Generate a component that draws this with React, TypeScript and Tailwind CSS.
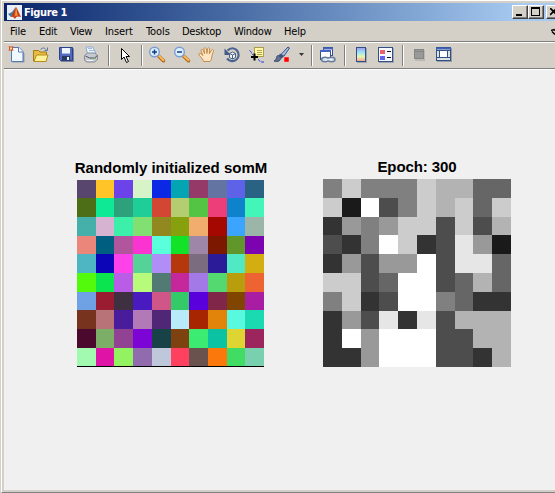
import React from "react";

const COLORS = [
  ["#58466f", "#fec428", "#6c43e9", "#d7f4c8", "#0b28e4", "#04a5b3", "#953969", "#6374a3", "#5e62e8", "#296282"],
  ["#4d6d17", "#0ee996", "#2ca17b", "#1dce98", "#d44634", "#b4cd70", "#54c445", "#ee3e79", "#0e83cb", "#43f5b8"],
  ["#45b0aa", "#d7b3d2", "#3df0a9", "#82df72", "#91891f", "#87a10e", "#f0ad6e", "#a40801", "#3ba4ff", "#9bb5a9"],
  ["#eb867a", "#005f81", "#b1559d", "#fb34d1", "#5affdb", "#12e328", "#9d86a8", "#7c1800", "#61972a", "#7b04b0"],
  ["#4db6c2", "#0c04b7", "#fe41e8", "#54d297", "#b18df7", "#b5380d", "#7b6c80", "#2b1b98", "#50e9c3", "#d2ae10"],
  ["#54fa0c", "#0be34f", "#b95de7", "#b8fa7a", "#517a72", "#c4289a", "#a279e7", "#53d970", "#b89d0d", "#ee6332"],
  ["#6fa2e5", "#991c30", "#3e3040", "#481abf", "#cf5687", "#34ca67", "#5900dc", "#802749", "#804600", "#a81da1"],
  ["#78331e", "#b87378", "#481c9b", "#b179b5", "#502776", "#b7ebf9", "#a82502", "#e2830a", "#59f9df", "#1bdab2"],
  ["#4c092e", "#7dae67", "#914292", "#7c04d5", "#174348", "#7e4210", "#3ceb72", "#0bc3a2", "#ded532", "#9c255d"],
  ["#a2fab0", "#df13a6", "#93f25f", "#906bae", "#bfc7db", "#ff405e", "#6a534e", "#fb790c", "#40dc64", "#79d0ae"],
];

const GRAYS = [
  [128, 204, 128, 128, 128, 204, 179, 179, 102, 102],
  [204, 26, 255, 77, 128, 204, 179, 204, 102, 204],
  [51, 153, 128, 153, 204, 204, 77, 204, 77, 179],
  [77, 51, 128, 255, 204, 51, 77, 230, 153, 26],
  [51, 153, 77, 153, 153, 255, 77, 230, 230, 102],
  [204, 204, 77, 102, 255, 255, 77, 102, 179, 102],
  [128, 204, 51, 77, 255, 255, 128, 102, 51, 51],
  [51, 153, 77, 230, 51, 230, 77, 179, 179, 179],
  [51, 255, 153, 255, 255, 255, 77, 77, 179, 179],
  [51, 51, 153, 255, 255, 255, 77, 77, 51, 179],
].map((r) => r.map((v) => `rgb(${v},${v},${v})`));

function Heatmap({ rows, className }: { rows: string[][]; className: string }) {
  return (
    <div className={`grid ${className}`}>
      {rows.flatMap((r, i) => r.map((c, j) => <div key={`${i}-${j}`} style={{ backgroundColor: c }} />))}
    </div>
  );
}

/* A toolbar slot; x is the slot's offset in the toolbar, w its width. */
function Slot({ x, w, children }: { x: number; w: number; children?: React.ReactNode }) {
  return (
    <svg className="block shrink-0" width={w} height={25} viewBox={`${x} 43 ${w} 25`} aria-hidden="true">
      {children}
    </svg>
  );
}

function Sep({ x }: { x: number }) {
  return (
    <g shapeRendering="crispEdges">
      <rect x={x} y={45} width={1} height={21} fill="#808080" />
      <rect x={x + 1} y={45} width={1} height={21} fill="#fff" />
    </g>
  );
}

function Magnifier({ x, plus }: { x: number; plus?: boolean }) {
  return (
    <g>
      <path d={`M${x + 10} 56.5l4.500 4.200`} stroke="#a8641e" strokeWidth="3.6" strokeLinecap="round" />
      <path d={`M${x + 10.2} 56.2l4.300 4`} stroke="#ffb653" strokeWidth="2.2" strokeLinecap="round" />
      <circle cx={x + 5.5} cy={52} r={4.8} fill="#d9f1fc" stroke="#7b9cd4" strokeWidth="1.4" />
      <path d={`M${x + 3} 52h5`} stroke="#173a80" strokeWidth="1.5" />
      {plus && <path d={`M${x + 5.5} 49.5v5`} stroke="#173a80" strokeWidth="1.5" />}
    </g>
  );
}

function Toolbar() {
  return (
    <div className="flex h-[25px] w-[551px] overflow-hidden bg-[#d4d0c8]">
      <Slot x={4} w={24}>
        <path d="M11.5 48.5h8l4 4v9h-12z" fill="#8d98ad" transform="translate(1 1)" />
        <path d="M11.5 47.500h7.500l4 4v10h-11.500z" fill="#f0f8ff" stroke="#5579b5" />
        <path d="M18.500 47.500v4.500h4.500" fill="#fff" stroke="#5579b5" />
        <path d="M8.500 46l5 5M13.500 46l-5 5" stroke="#ed8458" strokeWidth="1" />
        <rect x="9.500" y="47" width="3" height="3" fill="#ffd9a0" stroke="#d84f28" />
      </Slot>
      <Slot x={28} w={26}>
        <path d="M33.500 61V50.500h5l1.500 1.500h6.500v9z" fill="#e6bd3e" stroke="#a37b12" />
        <path d="M34 61.500l2.500-6.500h11.500l-2 6.500z" fill="#fff09a" stroke="#b78b1c" />
        <path d="M40.500 49.500c2-2 4-2 5.500 0M47.500 47.500v3h-3" fill="none" stroke="#58779b" />
      </Slot>
      <Slot x={54} w={26}>
        <path d="M60 48h13.500v13.500H61l-1-1z" fill="#7c8598" transform="translate(.5 .5)" />
        <path d="M59.500 47.500h13v13h-12l-1-1z" fill="#5468bd" stroke="#29418b" />
        <rect x="62" y="48" width="8" height="6" fill="#eef5ff" />
        <rect x="62" y="53" width="8" height="1" fill="#a2bce9" />
        <rect x="62" y="56" width="8" height="4" fill="#293761" />
        <rect x="67" y="57" width="2" height="3" fill="#eef5ff" />
      </Slot>
      <Slot x={80} w={25}>
        <path d="M87.500 54l-1.500-7h6.500l3.500 6z" fill="#eef7ff" stroke="#8fa9cd" />
        <path d="M88 48.500h4M89 50.500h5" stroke="#9cb9df" />
        <path d="M84.500 55.500l3-2.500h7l3 2.500v4l-3 2.500h-8l-2-2z" fill="#c6c9cf" stroke="#858b96" />
        <path d="M85.500 56l4 2h5l3-2.500" fill="none" stroke="#50565f" />
        <path d="M87 60.500h6" stroke="#f4f4f4" /><rect x="94" y="58" width="2" height="1" fill="#70ba52" />
      </Slot>
      <Slot x={105} w={39}>
        <Sep x={108} /><Sep x={141} />
        <path d="M121.500 48.500v11l2.500-2.500 2.500 5.500 2-1-2.500-5h3.500z" fill="#fff" stroke="#000" />
      </Slot>
      <Slot x={144} w={28}><Magnifier x={149} plus /></Slot>
      <Slot x={172} w={24}><Magnifier x={174} /></Slot>
      <Slot x={196} w={24}>
        <path d="M203.500 61.500l-1-2.500-3.500-4c-.8-1.500.8-2.300 2-1.200l2 1.700-2-4.500c-.5-1.700 1.300-2.200 2-.8l1.700 3.600-.7-4.800c-.2-1.600 1.800-1.700 2.200-.2l.8 4.700.5-4.700c.3-1.500 2.200-1.300 2 .2l-.2 4.800 2.200-3.600c1-1.300 2.500-.4 2 1l-1.500 4-.5 4-1.500 2.300z" fill="#ffe5c3" stroke="#c48d4c" />
      </Slot>
      <Slot x={220} w={26}>
        <path d="M227.500 50.500c3-3 7-3 9.500 0 2.500 3 2 7-.5 9-3 2.500-7 2-9.500-1" fill="none" stroke="#4b6390" strokeWidth="2.200" />
        <path d="M224.500 48.500v6.500h6.500z" fill="#435b86" />
        <path d="M229.500 53.500l3-1.500 3 1.500v4l-3 1.500-3-1.500z" fill="#eff4fb" stroke="#4c6185" />
        <path d="M229.500 53.500l3 1.500 3-1.500M232.500 55v4" fill="none" stroke="#4c6185" />
      </Slot>
      <Slot x={246} w={25}>
        <path d="M249.500 50.500c2 1 2 3 3.500 4.500M258 59.500c1.500 0 1.500 2.500 3 2.500h3" fill="none" stroke="#2937df" strokeDasharray="3 1" />
        <rect x="254.500" y="47.500" width="9" height="9" fill="#fff8a8" stroke="#ad9c4a" />
        <path d="M257 50.500h5M257 52.500h5M257 54.500h5" stroke="#b3a452" />
        <path d="M251 57h7M254.500 53.500v7" stroke="#000" strokeWidth="2" />
      </Slot>
      <Slot x={271} w={24}>
        <path d="M281 54.500l7-7.500 1.500 1-5.500 8z" fill="#a9bfe3" stroke="#344f82" />
        <path d="M280 53.500l4 3-2.500 2-3-2z" fill="#405078" />
        <path d="M278.500 55.500c-3 0-1 4-4.500 5.500 4 1.500 7-.5 7-3.500z" fill="#5f7191" stroke="#3d4d70" />
        <rect x="284" y="57" width="5" height="5" fill="#f50508" stroke="#ffbbb0" strokeWidth=".5" />
      </Slot>
      <Slot x={295} w={21}>
        <path d="M299 53h5l-2.500 3z" fill="#333" /><Sep x={311} />
      </Slot>
      <Slot x={316} w={30}>
        <rect x="323.500" y="47.500" width="9" height="8" fill="#fff" stroke="#35528e" /><path d="M323 48.500h10" stroke="#4564bf" strokeWidth="2" />
        <rect x="320.500" y="50.500" width="10" height="9" fill="#fff" stroke="#35528e" /><path d="M320 51h11" stroke="#4564bf" strokeWidth="2" />
        <ellipse cx="325" cy="59.500" rx="3.500" ry="2.300" fill="#d5dfec" stroke="#667c9b" strokeWidth="1.500" />
        <ellipse cx="331.500" cy="59.500" rx="3.500" ry="2.300" fill="#d5dfec" stroke="#667c9b" strokeWidth="1.500" />
        <path d="M325 59.500h7" stroke="#e7edf5" strokeWidth="1.500" /><Sep x={344} />
      </Slot>
      <Slot x={346} w={26}>
        <defs>
          <linearGradient id="colorbar" x1="0" y1="0" x2="0" y2="1">
            <stop offset="0" stopColor="#a197ef" /><stop offset=".35" stopColor="#9be5f7" />
            <stop offset=".65" stopColor="#e9f5ad" /><stop offset="1" stopColor="#f49e8c" />
          </linearGradient>
        </defs>
        <rect x="357" y="48" width="10" height="15" fill="#9da5b4" />
        <rect x="356.500" y="47.500" width="9" height="14" fill="url(#colorbar)" stroke="#344f84" />
      </Slot>
      <Slot x={372} w={32}>
        <rect x="379" y="48" width="15" height="15" fill="#9da5b4" />
        <rect x="378.500" y="47.500" width="14" height="14" fill="#f6f9ff" stroke="#344f84" />
        <rect x="380" y="50" width="5" height="4" fill="#e86565" /><rect x="380" y="56" width="5" height="4" fill="#6565ec" />
        <path d="M387 51.500h4M387 57.500h4" stroke="#111" /><Sep x={402} />
      </Slot>
      <Slot x={404} w={26}>
        <rect x="415" y="50" width="10" height="11" fill="#bbb8b2" />
        <rect x="414.500" y="49.500" width="9" height="9" fill="#999" stroke="#858585" /><path d="M415 51.500h8" stroke="#858585" />
      </Slot>
      <Slot x={430} w={125}>
        <rect x="437" y="48" width="15" height="14" fill="#969da9" />
        <rect x="436.500" y="47.500" width="14" height="13" fill="#dce2df" stroke="#344f84" />
        <path d="M436 48.500h15" stroke="#4162b9" strokeWidth="2" />
        <path d="M437 50.500h14M437 57.500h14M439.500 50v8M447.500 50v8" stroke="#344f84" />
        <rect x="440" y="51" width="7" height="6" fill="#fff" />
      </Slot>
    </div>
  );
}

const MENU = [
  { label: "File", box: "w-[29px]", text: "tracking-[-0.1px]" },
  { label: "Edit", box: "w-[31px]", text: "tracking-[-0.25px]" },
  { label: "View", box: "w-[35px]", text: "tracking-[-0.4px]" },
  { label: "Insert", box: "w-[41px]", text: "tracking-[-0.1px]" },
  { label: "Tools", box: "w-[36px]", text: "tracking-[-0.1px]" },
  { label: "Desktop", box: "w-[52px]", text: "tracking-[-0.25px]" },
  { label: "Window", box: "w-[50px]", text: "tracking-[-0.25px]" },
  { label: "Help", box: "w-[30px]", text: "tracking-[-0.2px]" },
];

const BUTTON = "h-[14px] w-4 shrink-0 border border-t-white border-l-white border-r-[#404040] border-b-[#404040] bg-[#d4d0c8] shadow-[inset_-1px_-1px_#808080]";

export default function App() {
  return (
    <div className="flex h-[493px] w-[555px] flex-col overflow-hidden border-l border-[#d4d0c8] bg-[#d4d0c8] font-['DejaVu_Sans_Condensed','DejaVu_Sans',sans-serif] text-black">
      <div className="flex h-[493px] flex-col border-t border-b border-l border-t-white border-b-[#808080] border-l-white pt-[2px] pl-[2px]">
        <div className="flex h-[18px] w-[551px] shrink-0 items-center overflow-hidden bg-linear-to-r from-[#0a246a] to-[#a6caf0] to-[94%]">
          <svg className="ml-[3px] block shrink-0" width="15" height="15" viewBox="0 0 15 15" aria-hidden="true">
            <rect width="15" height="15" fill="#e9edf5" />
            <path d="M1 9l4-2 3-4 1-1-3 9-2 1z" fill="#477da5" />
            <path d="M9 2l-4 8-1 2c2-1 3 1 4 2 1-3 3-3 6-2C12 8 10.500 4 9 2z" fill="#c63b1a" />
            <path d="M9 2l-1 8-1 2c3-3 3-1 4 0-1-3-1-7-2-10z" fill="#f39a36" />
          </svg>
          <div className="ml-[2px] w-[300px] pt-px text-[11px] leading-[16px] font-bold tracking-[-0.4px] text-white">Figure 1</div>
          <div className="ml-auto flex h-[14px] shrink-0">
            <div className={BUTTON}><div className="mt-[8px] ml-[3px] h-[2px] w-[6px] bg-black" /></div>
            <div className={BUTTON}><div className="mt-px ml-[2px] h-[9px] w-[9px] border border-t-2 border-black" /></div>
            <div className="ml-[2px] h-[14px] w-[9px] overflow-hidden">
              <div className={BUTTON}>
                <svg className="mt-[2px] ml-[3px] block" width="8" height="8" viewBox="0 0 8 8"><path d="M0 0l7 7M7 0L0 7" stroke="#000" strokeWidth="1.700" /></svg>
              </div>
            </div>
          </div>
        </div>
        <div className="flex h-5 w-[551px] shrink-0 items-center overflow-hidden pt-px pl-[6px] text-[11px] leading-[18px]">
          {MENU.map((m) => (
            <div key={m.label} className={`shrink-0 whitespace-nowrap ${m.box} ${m.text}`}>{m.label}</div>
          ))}
          <svg className="ml-auto block shrink-0" width="4" height="8" viewBox="0 0 4 8"><path d="M0 2.500l3-1 1 1M1 3.500l3 3" stroke="#000" strokeWidth="1.500" fill="none" /></svg>
        </div>
        <div className="h-px w-[551px] shrink-0 bg-[#808080]" />
        <div className="h-[27px] w-[551px] shrink-0 border-t border-b border-t-white border-b-[#808080]">
          <Toolbar />
        </div>
        <div className="flex h-[421px] w-[551px] shrink-0 items-start border-t border-white bg-[#f0f0f0] font-['Liberation_Sans',Arial,sans-serif]">
          <figure className="mt-[89px] ml-[63px] flex w-[208px] flex-col items-center">
            <figcaption className="h-[21px] text-[15px] leading-[18px] font-bold whitespace-nowrap">Randomly initialized somM</figcaption>
            <Heatmap
              rows={COLORS}
              className="mr-px box-content w-[187px] grid-cols-[19px_18px_19px_19px_19px_18px_19px_19px_18px_19px] grid-rows-[18px_19px_19px_18px_19px_19px_18px_19px_19px_18px] border-b border-black"
            />
          </figure>
          <figure className="mt-[88px] ml-[48px] flex w-[188px] flex-col items-center">
            <figcaption className="h-[21px] text-[15px] leading-[18px] font-bold tracking-[-0.08px] whitespace-nowrap">Epoch: 300</figcaption>
            <Heatmap
              rows={GRAYS}
              className="w-[188px] grid-cols-[19px_19px_18px_19px_19px_19px_19px_18px_19px_19px] grid-rows-[19px_19px_18px_19px_19px_19px_19px_18px_19px_19px]"
            />
          </figure>
        </div>
      </div>
    </div>
  );
}
